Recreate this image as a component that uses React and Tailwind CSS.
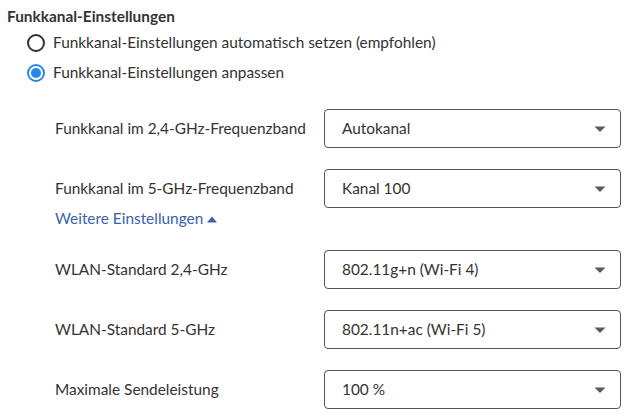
export default function App() {
  const Select = ({ value }) => (
    <div className="w-[297px] h-[39px] border border-[#50555a] rounded-[4px] flex items-center justify-between pl-[17px] pr-[14px] text-[#333]">
      <span>{value}</span>
      <svg width="12" height="8" viewBox="0 0 12 8"><path d="M0.5 1.5 L11.5 1.5 L6 7 Z" fill="#555b61" /></svg>
    </div>
  );
  const Row = ({ label, value }) => (
    <div className="flex items-center">
      <div className="w-[269px] text-[#333]">{label}</div>
      <Select value={value} />
    </div>
  );
  return (
    <div className="w-[636px] h-[417px] bg-white text-[15.4px] text-[#333] pl-[7px] pt-[5px]" style={{ fontFamily: 'Lato, "Open Sans", sans-serif' }}>
      <div className="font-bold leading-[22px]">Funkkanal-Einstellungen</div>
      <div className="pl-[20px] mt-[1px] flex flex-col">
        <label className="flex items-center h-[30px] gap-[8px]">
          <span className="w-[18px] h-[18px] rounded-full border-2 border-[#2f3236] bg-white"></span>
          <span>Funkkanal-Einstellungen automatisch setzen (empfohlen)</span>
        </label>
        <label className="flex items-center h-[30px] gap-[8px]">
          <span className="w-[18px] h-[18px] rounded-full border-2 border-[#2a87e3] bg-white flex items-center justify-center">
            <span className="w-[10px] h-[10px] rounded-full bg-[#2a87e3]"></span>
          </span>
          <span>Funkkanal-Einstellungen anpassen</span>
        </label>
      </div>
      <div className="pl-[48px] mt-[21px] flex flex-col">
        <Row label="Funkkanal im 2,4-GHz-Frequenzband" value="Autokanal" />
        <div className="mt-[21px]">
          <Row label="Funkkanal im 5-GHz-Frequenzband" value="Kanal 100" />
        </div>
        <div className="mt-[1px] h-[20px] flex items-center gap-[4px] text-[#3b62ae]">
          <span>Weitere Einstellungen</span>
          <svg width="10" height="7" viewBox="0 0 10 7"><path d="M0 6.5 L10 6.5 L5 0.5 Z" fill="#3b62ae" /></svg>
        </div>
        <div className="mt-[21px] flex flex-col gap-[21px]">
          <Row label="WLAN-Standard 2,4-GHz" value="802.11g+n (Wi-Fi 4)" />
          <Row label="WLAN-Standard 5-GHz" value="802.11n+ac (Wi-Fi 5)" />
          <Row label="Maximale Sendeleistung" value="100 %" />
        </div>
      </div>
    </div>
  );
}
